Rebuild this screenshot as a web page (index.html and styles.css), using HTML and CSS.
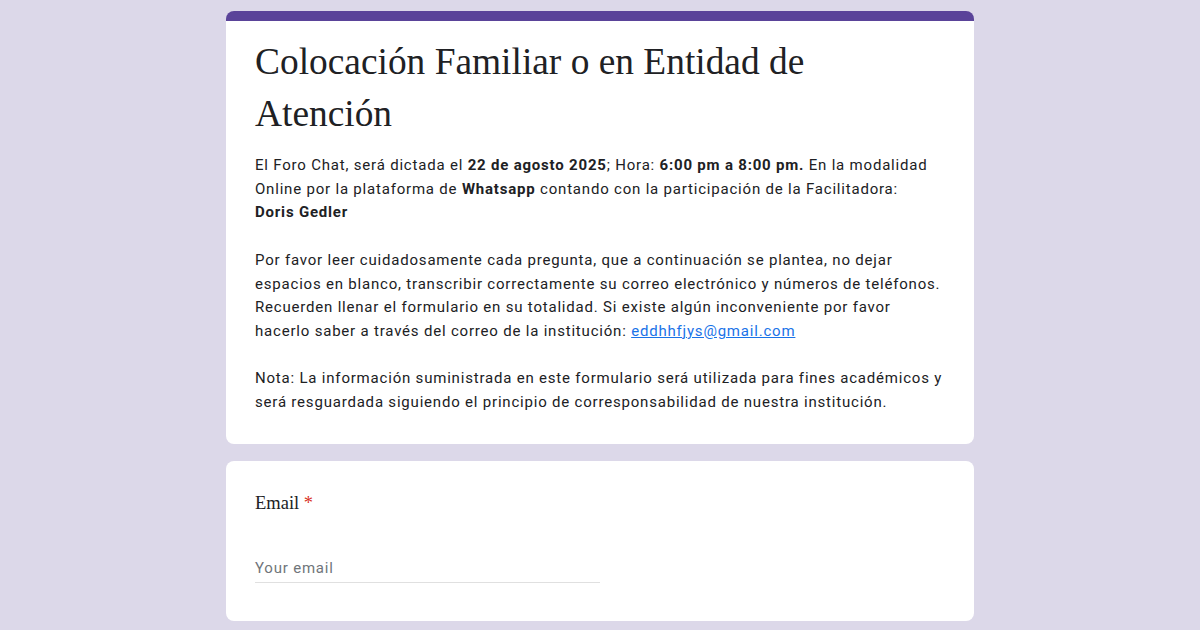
FILE: index.html
```html
<!DOCTYPE html>
<html lang="es">
<head>
<meta charset="utf-8">
<title>Colocación Familiar o en Entidad de Atención</title>
<link rel="stylesheet" href="styles.css">
</head>
<body>
<main class="form">
  <section class="card header-card">
    <h1 class="title">Colocación Familiar o en Entidad de Atención</h1>
    <div class="desc">
      <p>El Foro Chat, será dictada el <b>22 de agosto 2025</b>; Hora: <b>6:00 pm a 8:00 pm.</b> En la modalidad Online por la plataforma de <b>Whatsapp</b> contando con la participación de la Facilitadora:<br><b>Doris Gedler</b></p>
      <p>Por favor leer cuidadosamente cada pregunta, que a continuación se plantea, no dejar espacios en blanco, transcribir correctamente su correo electrónico y números de teléfonos. Recuerden llenar el formulario en su totalidad. Si existe algún inconveniente por favor hacerlo saber a través del correo de la institución: <a href="#">eddhhfjys@gmail.com</a></p>
      <p>Nota: La información suministrada en este formulario será utilizada para fines académicos y será resguardada siguiendo el principio de corresponsabilidad de nuestra institución.</p>
    </div>
  </section>
  <section class="card question-card">
    <div class="q-label">Email <span class="req">*</span></div>
    <div class="input">Your email</div>
  </section>
</main>
</body>
</html>
```
FILE: styles.css
```css
html, body {
  margin: 0;
  padding: 0;
  background: #dcd8e9;
}
body {
  font-family: Roboto, "Liberation Sans", Arial, sans-serif;
  color: #202124;
}
.form {
  width: 748px;
  margin: 0 auto;
  padding-top: 11px;
  display: flex;
  flex-direction: column;
  gap: 17px;
}
.card {
  background: #fff;
  border-radius: 8px;
  padding: 0 29px;
}
.header-card {
  border-top: 10px solid #5a4399;
  padding-top: 15px;
  padding-bottom: 29px;
}
.title {
  margin: 0;
  font-family: "Liberation Serif", "Times New Roman", serif;
  font-weight: 400;
  font-size: 37.4px;
  line-height: 52px;
  color: #202124;
}
.desc {
  margin-top: 14px;
  font-size: 15px;
  line-height: 23.7px;
  letter-spacing: 0.8px;
}
.desc p {
  margin: 0 0 23.7px;
}
.desc p:last-child {
  margin-bottom: 0;
}
.desc b {
  font-weight: 700;
  letter-spacing: 0.8px;
}
.desc a {
  color: #1a73e8;
  text-decoration: underline;
}
.question-card {
  padding-top: 28px;
  padding-bottom: 38px;
}
.q-label {
  font-family: "Liberation Serif", "Times New Roman", serif;
  font-size: 18.5px;
  line-height: 28px;
}
.req {
  color: #d93025;
}
.input {
  margin-top: 39px;
  width: 345px;
  font-size: 15px;
  letter-spacing: 0.8px;
  color: #70757a;
  line-height: 24px;
  padding-bottom: 2px;
  border-bottom: 1px solid #e0e0e0;
}
```
